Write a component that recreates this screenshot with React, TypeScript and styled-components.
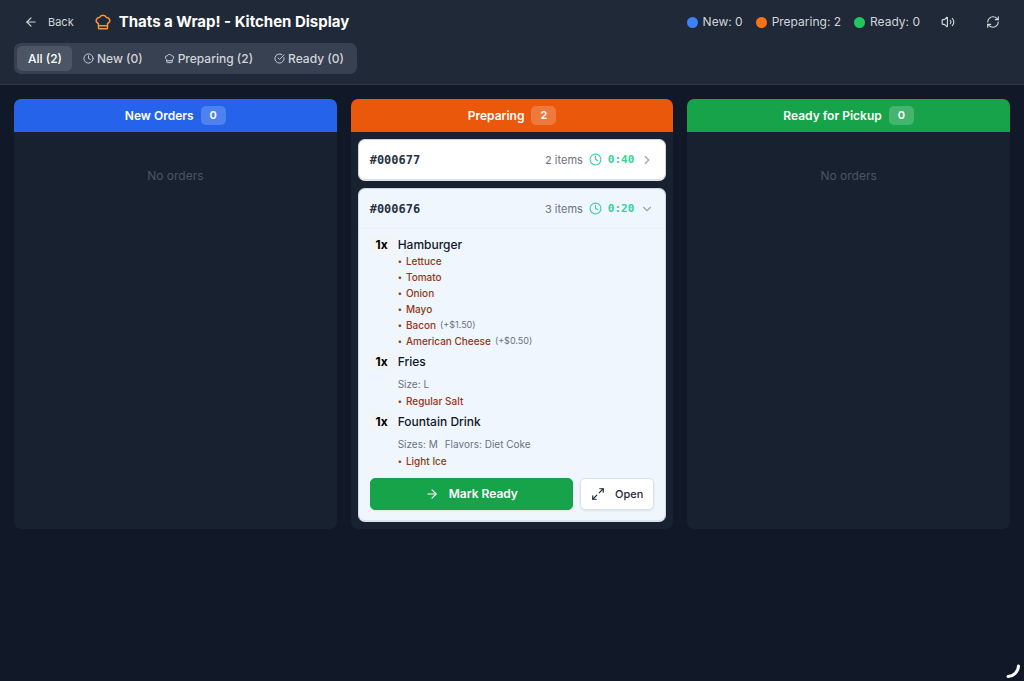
import React, { useState } from "react";
import styled, { createGlobalStyle } from "styled-components";
import {
  ArrowLeft,
  ArrowRight,
  ChefHat,
  ChevronDown,
  ChevronRight,
  CircleCheckBig,
  Clock,
  Maximize2,
  RefreshCw,
  Volume2,
} from "lucide-react";

const GlobalStyle = createGlobalStyle`
  *, *::before, *::after { box-sizing: border-box; }
  body {
    margin: 0;
    background: #111827;
    color: #d1d5db;
    font-family: Inter, "Liberation Sans", sans-serif;
    font-size: 12px;
    line-height: 16px;
  }
  button { font: inherit; border: 0; cursor: pointer; }
  h1, h2, h3, p, ul { margin: 0; padding: 0; }
  ul { list-style: none; }
  svg { flex: none; }
`;

const Page = styled.div`
  min-height: 100vh;
  background: #111827;
`;

const Header = styled.header`
  display: flex;
  flex-direction: column;
  gap: 7px;
  padding: 8px 14px 10px;
  background: #1f2937;
  border-bottom: 1px solid #2d3747;
`;

const TopRow = styled.div`
  display: flex;
  align-items: center;
  justify-content: space-between;
  height: 28px;
`;

const TitleGroup = styled.div`
  display: flex;
  align-items: center;
  gap: 10px;
`;

const BackButton = styled.button`
  display: flex;
  align-items: center;
  gap: 10px;
  height: 28px;
  padding: 0 10px;
  background: transparent;
  color: #d1d5db;
  font-size: 11px;
`;

const Title = styled.h1`
  display: flex;
  align-items: center;
  gap: 7px;
  color: #ffffff;
  font-size: 15px;
  font-weight: 700;
  line-height: 24px;

  svg { color: #fb923c; }
`;

const Controls = styled.div`
  display: flex;
  align-items: center;
  gap: 10px;
`;

const StatusGroup = styled.div`
  display: flex;
  align-items: center;
  gap: 13px;
`;

const Status = styled.span`
  display: flex;
  align-items: center;
  gap: 5px;
`;

const Dot = styled.span<{ $color: string }>`
  width: 11px;
  height: 11px;
  border-radius: 50%;
  background: ${(p) => p.$color};
`;

const IconButton = styled.button`
  display: grid;
  place-items: center;
  width: 35px;
  height: 28px;
  padding: 0;
  background: transparent;
  color: #d1d5db;
`;

const Tabs = styled.div`
  display: flex;
  align-self: flex-start;
  padding: 3px;
  border-radius: 7px;
  background: #374151;
`;

const Tab = styled.button<{ $active: boolean }>`
  display: flex;
  align-items: center;
  gap: 3px;
  height: 25px;
  padding: 0 10px 0 11px;
  border-radius: 5px;
  background: ${(p) => (p.$active ? "#4b5563" : "transparent")};
  color: ${(p) => (p.$active ? "#ffffff" : "#d1d5db")};
  font-weight: 500;
`;

const Board = styled.main`
  display: grid;
  grid-template-columns: repeat(3, minmax(0, 1fr));
  gap: 14px;
  padding: 14px;
`;

const Column = styled.section`
  border-radius: 7px;
  background: #18212f;
  overflow: hidden;
`;

const ColumnHeader = styled.header<{ $color: string }>`
  display: flex;
  align-items: center;
  justify-content: center;
  gap: 7px;
  height: 33px;
  background: ${(p) => p.$color};
  color: #ffffff;
`;

const ColumnTitle = styled.h2`
  font-size: 12px;
  font-weight: 600;
`;

const Count = styled.span`
  padding: 2px 9px;
  border-radius: 5px;
  background: rgba(255, 255, 255, 0.2);
  font-size: 11px;
  font-weight: 600;
  line-height: 15px;
`;

const Empty = styled.p`
  padding: 36px 0;
  color: #4b5563;
  text-align: center;
`;

const Orders = styled.div`
  display: flex;
  flex-direction: column;
  gap: 7px;
  padding: 7px;
`;

const Card = styled.article<{ $open: boolean }>`
  border: 1px solid #cfd6e0;
  border-bottom: 2px solid #dde3ec;
  border-radius: 7px;
  background: ${(p) => (p.$open ? "#f0f6fe" : "#ffffff")};
`;

const CardHeader = styled.button`
  display: flex;
  align-items: center;
  justify-content: space-between;
  width: 100%;
  height: 39px;
  padding: 0 11px;
  background: transparent;
`;

const OrderNumber = styled.span`
  color: #293342;
  font-family: "DejaVu Sans Mono", monospace;
  font-size: 12px;
  font-weight: 700;
`;

const Meta = styled.span`
  display: flex;
  align-items: center;
  gap: 6px;
  color: #6b7280;
  font-size: 11px;

  & > svg { color: #9ca3af; }
`;

const Timer = styled.span`
  display: flex;
  align-items: center;
  gap: 6px;
  color: #34d399;
  font-family: "DejaVu Sans Mono", monospace;
  font-size: 11px;
  font-weight: 700;
`;

const CardBody = styled.div`
  padding: 7px 11px 10px;
  border-top: 1px solid #edf2fa;
`;

const Item = styled.li`
  display: grid;
  grid-template-columns: 24px 1fr;
  column-gap: 4px;
  padding-bottom: 4px;
`;

const Quantity = styled.span`
  height: 17px;
  border-radius: 4px;
  background: #f3f4f6;
  color: #000000;
  font-weight: 700;
  line-height: 17px;
  text-align: center;
`;

const ItemName = styled.h3`
  color: #111827;
  font-size: 12px;
  font-weight: 500;
  line-height: 17px;
`;

const Options = styled.p`
  display: flex;
  gap: 7px;
  padding: 6px 0 1px;
  color: #6b7280;
  font-size: 10px;
`;

const Modifier = styled.li`
  display: flex;
  gap: 4px;
  color: #9a3412;
  font-size: 10px;
  font-weight: 500;

  &::before { content: "•"; font-size: 8px; }
`;

const Price = styled.span`
  color: #6b7280;
  font-size: 9px;
  font-weight: 400;
`;

const Actions = styled.div`
  display: flex;
  gap: 7px;
  padding-top: 5px;
`;

const ActionButton = styled.button<{ $primary?: boolean }>`
  display: flex;
  align-items: center;
  justify-content: center;
  flex: ${(p) => (p.$primary ? "1" : "none")};
  gap: 10px;
  height: 32px;
  padding: 0 10px;
  border: 1px solid ${(p) => (p.$primary ? "#16a34a" : "#dbe1ea")};
  border-radius: 5px;
  background: ${(p) => (p.$primary ? "#16a34a" : "#ffffff")};
  color: ${(p) => (p.$primary ? "#ffffff" : "#1f2937")};
  font-size: ${(p) => (p.$primary ? "12px" : "11px")};
  font-weight: ${(p) => (p.$primary ? 600 : 500)};
  box-shadow: 0 1px 2px rgba(0, 0, 0, 0.08);
`;

const CornerArc = styled.svg`
  position: fixed;
  right: 3px;
  bottom: 2px;
`;

type Mod = { name: string; price?: string };
type OrderItem = { name: string; options?: string[]; mods: Mod[] };
type Order = { number: string; count: number; time: string; items: OrderItem[] };

const preparing: Order[] = [
  { number: "#000677", count: 2, time: "0:40", items: [] },
  {
    number: "#000676",
    count: 3,
    time: "0:20",
    items: [
      {
        name: "Hamburger",
        mods: [
          { name: "Lettuce" },
          { name: "Tomato" },
          { name: "Onion" },
          { name: "Mayo" },
          { name: "Bacon", price: "(+$1.50)" },
          { name: "American Cheese", price: "(+$0.50)" },
        ],
      },
      { name: "Fries", options: ["Size: L"], mods: [{ name: "Regular Salt" }] },
      {
        name: "Fountain Drink",
        options: ["Sizes: M", "Flavors: Diet Coke"],
        mods: [{ name: "Light Ice" }],
      },
    ],
  },
];

const columns = [
  { title: "New Orders", color: "#2563eb", orders: [] as Order[] },
  { title: "Preparing", color: "#ea580c", orders: preparing },
  { title: "Ready for Pickup", color: "#16a34a", orders: [] as Order[] },
];

const statuses = [
  { label: "New: 0", color: "#3b82f6" },
  { label: "Preparing: 2", color: "#f97316" },
  { label: "Ready: 0", color: "#22c55e" },
];

const tabs = [
  { label: "All (2)", Icon: null },
  { label: "New (0)", Icon: Clock },
  { label: "Preparing (2)", Icon: ChefHat },
  { label: "Ready (0)", Icon: CircleCheckBig },
];

function OrderCard({ order }: { order: Order }) {
  const [open, setOpen] = useState(order.items.length > 0);
  const Chevron = open ? ChevronDown : ChevronRight;
  return (
    <Card $open={open}>
      <CardHeader aria-expanded={open} onClick={() => setOpen(!open)}>
        <OrderNumber>{order.number}</OrderNumber>
        <Meta>
          {order.count} items
          <Timer>
            <Clock size={13} />
            {order.time}
          </Timer>
          <Chevron size={14} />
        </Meta>
      </CardHeader>
      {open && (
        <CardBody>
          <ul>
            {order.items.map((item) => (
              <Item key={item.name}>
                <Quantity>1x</Quantity>
                <div>
                  <ItemName>{item.name}</ItemName>
                  {item.options && (
                    <Options>
                      {item.options.map((o) => (
                        <span key={o}>{o}</span>
                      ))}
                    </Options>
                  )}
                  <ul>
                    {item.mods.map((m) => (
                      <Modifier key={m.name}>
                        {m.name}
                        {m.price && <Price>{m.price}</Price>}
                      </Modifier>
                    ))}
                  </ul>
                </div>
              </Item>
            ))}
          </ul>
          <Actions>
            <ActionButton $primary>
              <ArrowRight size={14} />
              Mark Ready
            </ActionButton>
            <ActionButton>
              <Maximize2 size={14} />
              Open
            </ActionButton>
          </Actions>
        </CardBody>
      )}
    </Card>
  );
}

export default function App() {
  const [active, setActive] = useState(0);
  return (
    <Page>
      <GlobalStyle />
      <Header>
        <TopRow>
          <TitleGroup>
            <BackButton>
              <ArrowLeft size={14} />
              Back
            </BackButton>
            <Title>
              <ChefHat size={18} />
              Thats a Wrap! - Kitchen Display
            </Title>
          </TitleGroup>
          <Controls>
            <StatusGroup>
              {statuses.map((s) => (
                <Status key={s.label}>
                  <Dot $color={s.color} />
                  {s.label}
                </Status>
              ))}
            </StatusGroup>
            <IconButton aria-label="Sound">
              <Volume2 size={14} />
            </IconButton>
            <IconButton aria-label="Refresh">
              <RefreshCw size={14} />
            </IconButton>
          </Controls>
        </TopRow>
        <Tabs>
          {tabs.map(({ label, Icon }, i) => (
            <Tab key={label} $active={i === active} onClick={() => setActive(i)}>
              {Icon && <Icon size={11} />}
              {label}
            </Tab>
          ))}
        </Tabs>
      </Header>
      <Board>
        {columns.map((c) => (
          <Column key={c.title}>
            <ColumnHeader $color={c.color}>
              <ColumnTitle>{c.title}</ColumnTitle>
              <Count>{c.orders.length}</Count>
            </ColumnHeader>
            {c.orders.length === 0 ? (
              <Empty>No orders</Empty>
            ) : (
              <Orders>
                {c.orders.map((o) => (
                  <OrderCard key={o.number} order={o} />
                ))}
              </Orders>
            )}
          </Column>
        ))}
      </Board>
      <CornerArc width="15" height="15" viewBox="0 0 15 15" fill="none" aria-hidden="true">
        <path
          d="M12.5 2A11 11 0 0 1 2 12.5"
          stroke="#ffffff"
          strokeWidth="3"
          strokeLinecap="round"
        />
      </CornerArc>
    </Page>
  );
}
